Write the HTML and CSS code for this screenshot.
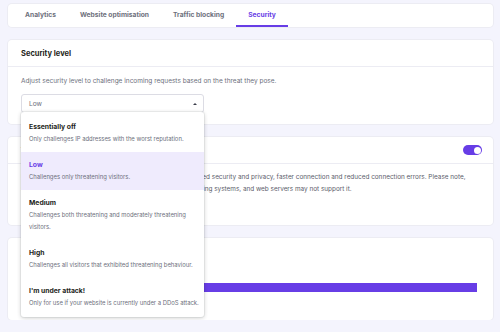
FILE: index.html
```html
<!DOCTYPE html>
<html>
<head>
  <link rel="stylesheet" href="styles.css">
</head>
<body>
  <div class="tabs">
    <div class="tab">Analytics</div>
    <div class="tab">Website optimisation</div>
    <div class="tab">Traffic blocking</div>
    <div class="tab active">Security</div>
  </div>

  <div class="card">
    <div class="card-head">Security level</div>
    <div class="card-body">
      <p class="desc">Adjust security level to challenge incoming requests based on the threat they pose.</p>
      <div class="select-wrap">
        <div class="select">
          <span>Low</span>
          <span class="arrow"></span>
        </div>
        <div class="dropdown">
          <div class="option">
            <div class="opt-title">Essentially off</div>
            <div class="opt-desc">Only challenges IP addresses with the worst reputation.</div>
          </div>
          <div class="option selected">
            <div class="opt-title">Low</div>
            <div class="opt-desc">Challenges only threatening visitors.</div>
          </div>
          <div class="option">
            <div class="opt-title">Medium</div>
            <div class="opt-desc">Challenges both threatening and moderately threatening<br>visitors.</div>
          </div>
          <div class="option">
            <div class="opt-title">High</div>
            <div class="opt-desc">Challenges all visitors that exhibited threatening behaviour.</div>
          </div>
          <div class="option">
            <div class="opt-title">I'm under attack!</div>
            <div class="opt-desc">Only for use if your website is currently under a DDoS attack.</div>
          </div>
        </div>
      </div>
    </div>
  </div>

  <div class="card">
    <div class="card-head row">
      <span>TLS 1.3</span>
      <span class="toggle"><span class="knob"></span></span>
    </div>
    <div class="card-body tall">
      <p class="text">Use the newest TLS 1.3 protocol on your website for enhanced security and privacy, faster connection and reduced connection errors. Please note,<br>some older devices, browsers, network middleboxes, operating systems, and web servers may not support it.</p>
    </div>
  </div>

  <div class="card">
    <div class="card-plain">
      <div class="plain-title">Challenged requests</div>
      <div class="bar"></div>
    </div>
  </div>
</body>
</html>
```

FILE: styles.css
```css
body {
  margin: 0;
  padding: 4px 7px 0 8px;
  background-color: #f4f4fd;
  font-family: Inter, "Noto Sans", sans-serif;
  color: #2f2f3b;
}

.tabs {
  display: flex;
  height: 23px;
  padding-left: 5px;
  background-color: #ffffff;
  border-radius: 4px;
  box-shadow: 0 0 0 1px #ececf3;
}

.tab {
  display: flex;
  align-items: center;
  padding: 0 12px;
  font-size: 6.7px;
  font-weight: 700;
  color: #6d6f7c;
  border-bottom: 2px solid transparent;
  box-sizing: border-box;
}

.tab.active {
  color: #673de6;
  border-bottom-color: #673de6;
}

.card {
  margin-top: 13px;
  background-color: #ffffff;
  border-radius: 4px;
  box-shadow: 0 0 0 1px #ececf3;
}

.card-head {
  height: 26px;
  padding: 0 13px;
  display: flex;
  align-items: center;
  font-size: 7.5px;
  font-weight: 700;
  color: #1d1e20;
  border-bottom: 1px solid #ececf3;
}

.card-head.row {
  justify-content: space-between;
  padding-right: 11px;
}

.card-body {
  padding: 8px 13px 11px;
}

.card-body.tall {
  padding: 7px 13px 30px;
}

.desc {
  margin: 0 0 7px;
  font-size: 6.5px;
  line-height: 12px;
  color: #6d6f7c;
}

.text {
  margin: 0;
  font-size: 6.4px;
  line-height: 12px;
  color: #5b5d6b;
  white-space: nowrap;
}

.select-wrap {
  position: relative;
  width: 183px;
}

.select {
  height: 17px;
  border: 1px solid #dcdce4;
  border-radius: 3px;
  display: flex;
  align-items: center;
  justify-content: space-between;
  padding: 0 6px 0 7px;
  font-size: 6.6px;
  color: #6d6f7c;
}

.arrow {
  width: 0;
  height: 0;
  border-left: 2px solid transparent;
  border-right: 2px solid transparent;
  border-bottom: 2.5px solid #3b3d4a;
}

.dropdown {
  position: absolute;
  top: 18px;
  left: 0;
  width: 183px;
  padding: 2px 0 1px;
  background-color: #ffffff;
  border-radius: 3px;
  box-shadow: 0 1px 4px rgba(29, 30, 32, 0.22), 0 0 0 1px rgba(29, 30, 32, 0.05);
  z-index: 10;
}

.option {
  padding: 7px 8px;
  line-height: 12px;
}

.option.selected {
  background-color: #efebfd;
}

.opt-title {
  font-size: 6.8px;
  font-weight: 700;
  color: #1d1e20;
}

.option.selected .opt-title {
  color: #673de6;
}

.opt-desc {
  font-size: 5.9px;
  color: #6d6f7c;
  white-space: nowrap;
}

.toggle {
  width: 19px;
  height: 10px;
  border-radius: 5px;
  background-color: #673de6;
  display: flex;
  align-items: center;
  justify-content: flex-end;
  padding: 0 1.5px;
  box-sizing: border-box;
}

.knob {
  width: 7px;
  height: 7px;
  border-radius: 50%;
  background-color: #ffffff;
}

.card-plain {
  height: 82px;
  padding: 14px 16px 0 13px;
  box-sizing: border-box;
}

.plain-title {
  font-size: 7.5px;
  font-weight: 700;
  color: #1d1e20;
  margin-bottom: 22px;
}

.bar {
  height: 9px;
  background-color: #673de6;
}
```
